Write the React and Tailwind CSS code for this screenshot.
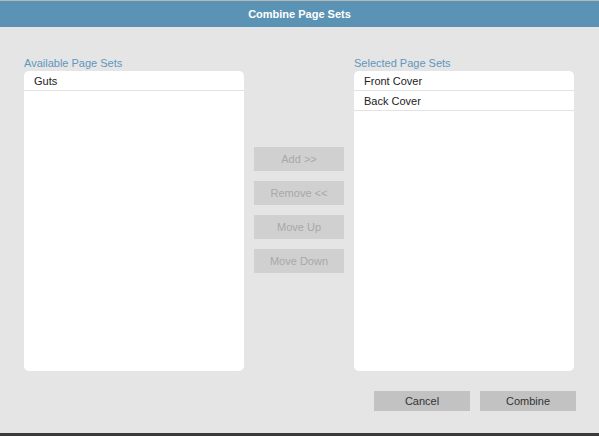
import React from 'react';

const List = ({ label, items }) => (
    <div className="w-[220px] flex flex-col">
        <div className="text-[11px] text-[#5f97bd] h-[16px] leading-[16px] mt-[28px] mb-[0px]">{label}</div>
        <div className="bg-white rounded-[5px] h-[300px] overflow-hidden">
            {items.map((it) => (
                <div key={it} className="h-[20px] leading-[20px] px-[10px] text-[11px] text-[#222] border-b border-[#e2e2e2]">{it}</div>
            ))}
        </div>
    </div>
);

const MidButton = ({ children }) => (
    <div className="w-[90px] h-[24px] leading-[24px] text-center text-[11px] text-[#a8a8a8] bg-[#d0d0d0]">{children}</div>
);

const App = () => {
    return (
        <div className="w-[599px] h-[436px] bg-[#e5e5e5] flex flex-col relative overflow-hidden" style={{ fontFamily: '"Liberation Sans", Arial, sans-serif' }}>
            <div className="h-[1px] bg-[#b8b8b8]" />
            <div className="h-[26px] bg-[#5b93b5] text-white text-[11px] font-bold flex items-center justify-center">Combine Page Sets</div>
            <div className="flex px-[24px] gap-[10px]">
                <List label="Available Page Sets" items={['Guts']} />
                <div className="flex flex-col gap-[10px] pt-[120px]">
                    <MidButton>Add &gt;&gt;</MidButton>
                    <MidButton>Remove &lt;&lt;</MidButton>
                    <MidButton>Move Up</MidButton>
                    <MidButton>Move Down</MidButton>
                </div>
                <List label="Selected Page Sets" items={['Front Cover', 'Back Cover']} />
            </div>
            <div className="flex justify-end gap-[10px] pr-[23px] mt-[20px]">
                <div className="w-[96px] h-[20px] leading-[20px] text-center text-[11px] text-[#333] bg-[#c2c2c2]">Cancel</div>
                <div className="w-[96px] h-[20px] leading-[20px] text-center text-[11px] text-[#333] bg-[#c2c2c2]">Combine</div>
            </div>
            <div className="absolute bottom-0 left-0 right-0 h-[3px] bg-[#3a3a3a]" />
        </div>
    );
};

export default App;
